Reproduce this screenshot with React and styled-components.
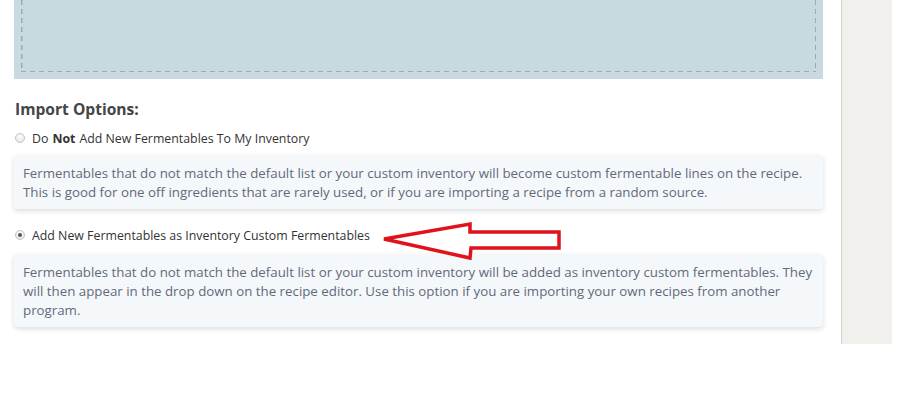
import React from 'react';
import styled, { createGlobalStyle } from 'styled-components';

const GlobalStyle = createGlobalStyle`
    body {
        margin: 0;
        background: #ffffff;
        font-family: "Open Sans", "Noto Sans", sans-serif;
    }
`;

const Page = styled.div`
    display: flex;
    flex-direction: row;
    align-items: flex-start;
    width: 898px;
    height: 413px;
    overflow: hidden;
    position: relative;
`;

const Main = styled.div`
    width: 809px;
    margin-left: 14px;
`;

const Sidebar = styled.div`
    width: 50px;
    height: 344px;
    margin-left: 18px;
    background: #f2f0ec;
    border-left: 1px solid #d6d4d0;
`;

const DropZone = styled.div`
    height: 79px;
    background: #c8d9e0;
    padding: 0 7px 7px 7px;
    box-sizing: border-box;
`;

// dashes drawn as gradients so they come out longer than the browser's dashed border
const DropInner = styled.div`
    height: 100%;
    background-image:
        repeating-linear-gradient(to bottom, #98abb2 0 5px, transparent 5px 9px),
        repeating-linear-gradient(to bottom, #98abb2 0 5px, transparent 5px 9px),
        repeating-linear-gradient(to right, #98abb2 0 5px, transparent 5px 9px);
    background-size: 1.5px 100%, 1.5px 100%, 100% 1.5px;
    background-position: left top, right top, left bottom;
    background-repeat: no-repeat;
`;

const Heading = styled.h3`
    margin: 19px 0 0 1px;
    font-size: 15.6px;
    font-weight: 700;
    line-height: 22px;
    color: #454545;
`;

const OptionRow = styled.label`
    display: flex;
    flex-direction: row;
    align-items: center;
    height: 20px;
    margin-top: ${props => props.top}px;
    margin-left: 1px;
    font-size: 12.35px;
    color: #333333;

    b {
        font-weight: 700;
        margin: 0 4px;
    }
`;

const Radio = styled.span`
    width: 10px;
    height: 10px;
    border-radius: 50%;
    border: 1px solid #c4c4c4;
    background: radial-gradient(circle at 50% 35%, #fdfdfd 0%, #e2e2e2 100%);
    margin-right: 7px;
    display: flex;
    align-items: center;
    justify-content: center;
    box-sizing: border-box;

    &::after {
        content: '';
        width: 4px;
        height: 4px;
        border-radius: 50%;
        background: ${props => (props.checked ? '#555555' : 'transparent')};
    }
`;

const Card = styled.div`
    margin-top: ${props => props.top}px;
    background: #f5f8fb;
    border-radius: 4px;
    box-shadow: 0 2px 5px rgba(30, 40, 70, 0.16);
    padding: 9px 9px 7px 9px;
    font-size: 13.3px;
    line-height: 19px;
    color: #626a79;
    white-space: nowrap;
`;

const Arrow = styled.svg`
    position: absolute;
    left: 378px;
    top: 218px;
`;

const App = () => {
    return (
        <>
            <GlobalStyle />
            <Page>
                <Main>
                    <DropZone>
                        <DropInner />
                    </DropZone>
                    <Heading>Import Options:</Heading>
                    <OptionRow top={8}>
                        <Radio />
                        Do<b>Not</b>Add New Fermentables To My Inventory
                    </OptionRow>
                    <Card top={7}>
                        Fermentables that do not match the default list or your custom inventory will become custom fermentable lines on the recipe.
                        <br />
                        This is good for one off ingredients that are rarely used, or if you are importing a recipe from a random source.
                    </Card>
                    <OptionRow top={16}>
                        <Radio checked />
                        Add New Fermentables as Inventory Custom Fermentables
                    </OptionRow>
                    <Card top={9}>
                        Fermentables that do not match the default list or your custom inventory will be added as inventory custom fermentables. They
                        <br />
                        will then appear in the drop down on the recipe editor. Use this option if you are importing your own recipes from another
                        <br />
                        program.
                    </Card>
                </Main>
                <Sidebar />
                <Arrow width="190" height="46" viewBox="0 0 190 46">
                    <polygon
                        points="6,21 92,6 92,14 181,14 181,30 93,30 92,40"
                        fill="none"
                        stroke="#e0121c"
                        strokeWidth="3.5"
                        strokeLinejoin="miter"
                    />
                </Arrow>
            </Page>
        </>
    );
};

export default App;
